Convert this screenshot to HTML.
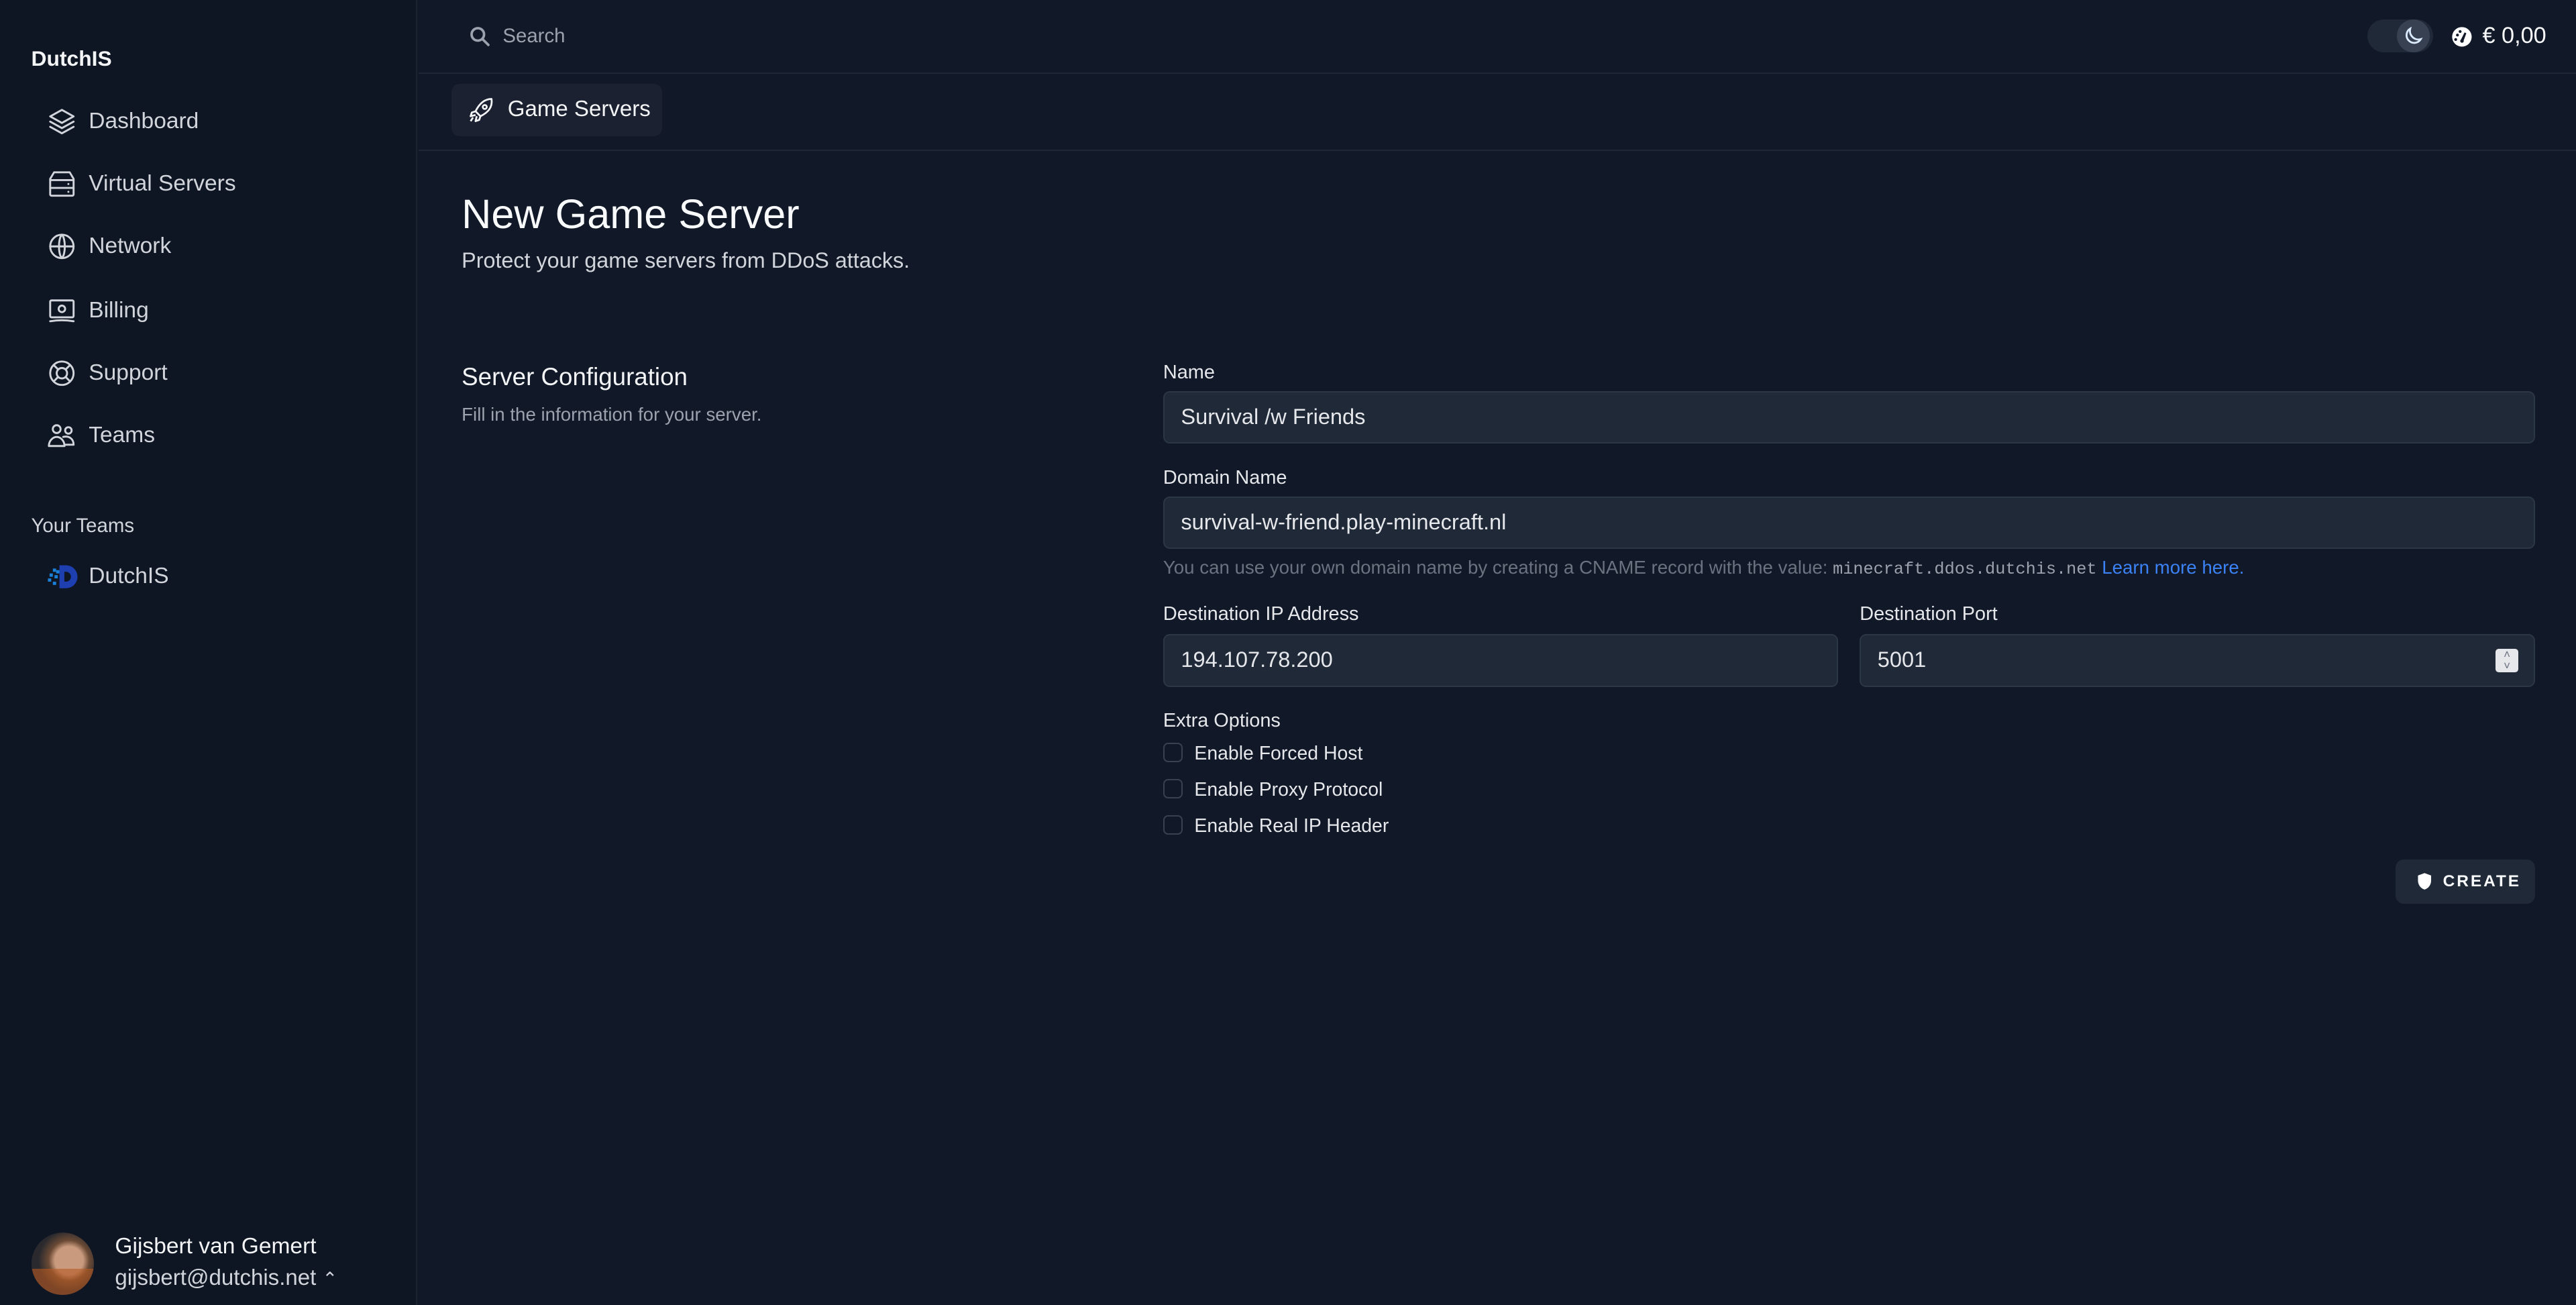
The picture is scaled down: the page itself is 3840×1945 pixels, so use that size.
<!DOCTYPE html>
<html><head><meta charset="utf-8"><style>
*{box-sizing:border-box;margin:0;padding:0}
html,body{width:3840px;height:1945px;overflow:hidden;background:#111827}
#r{zoom:2.449;width:1568px;height:794.2px;position:relative;top:1px;font-family:"Liberation Sans",Arial,sans-serif;color:#e5e7eb}
.abs{position:absolute}
#side{left:0;top:-1px;width:254px;height:796px;background:#0f1623;border-right:1px solid #1b2230}
.nav{position:absolute;left:28px;display:flex;align-items:center;font-size:13.7px;color:#d1d5db;height:20px}
.nav svg{width:19px;height:19px;margin-right:7px;fill:none;stroke:#d1d5db;stroke-width:1.5;stroke-linecap:round;stroke-linejoin:round}
.lbl{position:absolute;font-size:11.8px;color:#e5e7eb}
.inp{position:absolute;height:32px;background:#1f2937;border:1px solid #2b3646;border-radius:4px;font-size:13.3px;color:#e5e7eb;padding-left:10px;line-height:30px}
.cb{position:absolute;left:708px;width:12px;height:12px;border:1px solid #374151;border-radius:3px;background:#111827}
.cbl{position:absolute;left:727px;font-size:11.6px;color:#e5e7eb}
</style></head><body><div id="r">
<div id="side" class="abs">
 <div class="abs" style="left:19px;top:28px;font-size:13px;font-weight:bold;color:#f3f4f6">DutchIS</div>
 <div class="nav" style="top:64px"><svg viewBox="0 0 24 24"><path d="M12 3 3 8l9 5 9-5z"/><path d="M3 12l9 5 9-5"/><path d="M3 16l9 5 9-5"/></svg>Dashboard</div>
 <div class="nav" style="top:102px"><svg viewBox="0 0 24 24"><path d="M6 3h12l3 5v12a1 1 0 0 1-1 1H4a1 1 0 0 1-1-1V8z"/><path d="M3 9h18M3 15h18"/><path d="M17 12h.01M17 18h.01"/></svg>Virtual Servers</div>
 <div class="nav" style="top:140px"><svg viewBox="0 0 24 24"><circle cx="12" cy="12" r="9"/><path d="M3 12h18M12 3c3 3 3 15 0 18M12 3c-3 3-3 15 0 18"/></svg>Network</div>
 <div class="nav" style="top:179px"><svg viewBox="0 0 24 24"><rect x="3" y="4" width="18" height="13" rx="1"/><circle cx="12" cy="10.5" r="2.5"/><path d="M3 20c6-1 12-1 18 0"/></svg>Billing</div>
 <div class="nav" style="top:217px"><svg viewBox="0 0 24 24"><circle cx="12" cy="12" r="9"/><circle cx="12" cy="12" r="4"/><path d="M6 6l3 3M18 6l-3 3M6 18l3-3M18 18l-3-3"/></svg>Support</div>
 <div class="nav" style="top:255px"><svg viewBox="0 0 24 24"><circle cx="8" cy="7" r="3"/><circle cx="17" cy="8" r="2.5"/><path d="M2 20c0-4 3-7 6-7s6 3 6 7zM13 13c4-1 8 1 8 6h-6"/></svg>Teams</div>
 <div class="abs" style="left:19px;top:313px;font-size:12px;color:#d1d5db">Your Teams</div>
 <div class="abs" style="left:28px;top:343px;width:20px;height:16px">
  <svg viewBox="0 0 20 16" width="20" height="16"><path d="M8 1h4a7 7 0 0 1 0 14H8z" fill="#1e3fb0"/><path d="M11 5h1a3 3 0 0 1 0 6h-1z" fill="#0f1623"/><g fill="#1a7fd6"><rect x="4" y="3" width="2" height="2"/><rect x="2" y="6" width="2" height="2"/><rect x="5" y="7" width="2" height="2"/><rect x="1" y="9" width="2" height="2"/><rect x="4" y="11" width="2" height="2"/><rect x="6" y="4" width="2" height="2"/></g></svg>
 </div>
 <div class="abs" style="left:54px;top:343px;font-size:13.7px;color:#d1d5db">DutchIS</div>
 <div class="abs" style="left:19px;top:750px;width:38px;height:38px;border-radius:50%;background:radial-gradient(circle at 60% 45%,#c99a7e 0 28%,#6b4a35 40%,#2a2a2e 60%);overflow:hidden"><div class="abs" style="left:0;top:22px;width:38px;height:16px;background:#b85a22;opacity:.6"></div></div>
 <div class="abs" style="left:70px;top:751px;font-size:13.7px;color:#f3f4f6">Gijsbert van Gemert</div>
 <div class="abs" style="left:70px;top:770px;font-size:13.5px;color:#d1d5db">gijsbert@dutchis.net <span style="font-size:11px">&#8963;</span></div>
</div>
<div class="abs" style="left:255px;top:43px;right:0;height:1px;background:#1e2736"></div>
<svg class="abs" style="left:285px;top:14px" width="14" height="14" viewBox="0 0 24 24" fill="none" stroke="#9ca3af" stroke-width="2.6" stroke-linecap="round"><circle cx="10" cy="10" r="6.5"/><path d="M15 15l6 6"/></svg>
<div class="abs" style="left:306px;top:14px;font-size:12px;color:#9ca3af">Search</div>
<div class="abs" style="left:1441px;top:11px;width:40px;height:20px;border-radius:10px;background:#1f2937"></div>
<div class="abs" style="left:1459px;top:11px;width:20px;height:20px;border-radius:50%;background:#374151"></div>
<svg class="abs" style="left:1462px;top:14px" width="14" height="14" viewBox="0 0 24 24" fill="none" stroke="#dbeafe" stroke-width="2"><path d="M20 15A9 9 0 0 1 9 4a8 8 0 1 0 11 11z"/></svg>
<svg class="abs" style="left:1492px;top:15px" width="13" height="13" viewBox="0 0 24 24"><circle cx="12" cy="12" r="11" fill="#fff"/><g fill="#111827"><circle cx="7" cy="10" r="1.6"/><circle cx="10" cy="6" r="1.6"/><circle cx="5" cy="15" r="1.6"/><path d="M15 7l2 1-3 8a2 2 0 1 1-3-1z"/></g></svg>
<div class="abs" style="left:1511px;top:13px;font-size:14px;color:#f9fafb">€ 0,00</div>
<div class="abs" style="left:255px;top:90px;right:0;height:1px;background:#1e2736"></div>
<div class="abs" style="left:275px;top:50px;width:128px;height:32px;border-radius:5px;background:#1b2130"></div>
<svg class="abs" style="left:284px;top:57px" width="18" height="18" viewBox="0 0 24 24" fill="none" stroke="#f3f4f6" stroke-width="1.5" stroke-linejoin="round"><path d="M20 3c-6 0-10 4-13 10l4 4c6-3 10-7 9-14z"/><circle cx="14.5" cy="9.5" r="1.6"/><path d="M7 13l-3 1-1 3 4-1M11 17l-1 3-3 1 1-4M5 18l-2 3"/></svg>
<div class="abs" style="left:309px;top:58px;font-size:13.5px;color:#f3f4f6">Game Servers</div>
<div class="abs" style="left:281px;top:115px;font-size:25px;color:#f9fafb">New Game Server</div>
<div class="abs" style="left:281px;top:150px;font-size:13.2px;color:#d1d5db">Protect your game servers from DDoS attacks.</div>
<div class="abs" style="left:281px;top:220px;font-size:15px;color:#f3f4f6">Server Configuration</div>
<div class="abs" style="left:281px;top:245px;font-size:11.3px;color:#9ca3af">Fill in the information for your server.</div>
<div class="lbl" style="left:708px;top:219px">Name</div>
<div class="inp" style="left:708px;top:237px;width:835px">Survival /w Friends</div>
<div class="lbl" style="left:708px;top:283px">Domain Name</div>
<div class="inp" style="left:708px;top:301px;width:835px">survival-w-friend.play-minecraft.nl</div>
<div class="abs" style="left:708px;top:338px;font-size:11.3px;color:#6b7280">You can use your own domain name by creating a CNAME record with the value: <span style="font-family:'Liberation Mono',monospace;font-size:10.3px;color:#9ca3af">minecraft.ddos.dutchis.net</span> <span style="color:#3b82f6">Learn more here.</span></div>
<div class="lbl" style="left:708px;top:366px">Destination IP Address</div>
<div class="lbl" style="left:1132px;top:366px">Destination Port</div>
<div class="inp" style="left:708px;top:385px;width:411px">194.107.78.200</div>
<div class="inp" style="left:1132px;top:385px;width:411px">5001</div>
<div class="abs" style="left:1519px;top:394px;width:14px;height:14px;background:#e5e7eb;border-radius:2px;font-size:7px;color:#6b7280;text-align:center;line-height:7px">&#708;<br>&#709;</div>
<div class="lbl" style="left:708px;top:431px">Extra Options</div>
<div class="cb" style="top:451px"></div><div class="cbl" style="top:451px">Enable Forced Host</div>
<div class="cb" style="top:473px"></div><div class="cbl" style="top:473px">Enable Proxy Protocol</div>
<div class="cb" style="top:495px"></div><div class="cbl" style="top:495px">Enable Real IP Header</div>
<div class="abs" style="left:1458px;top:522px;width:85px;height:27px;border-radius:5px;background:#1f2937"></div>
<svg class="abs" style="left:1471px;top:530px" width="10" height="11" viewBox="0 0 20 22"><path d="M10 1 2 4v6c0 6 4 10 8 11 4-1 8-5 8-11V4z" fill="#fff"/></svg>
<div class="abs" style="left:1487px;top:530px;font-size:10px;font-weight:bold;letter-spacing:1.2px;color:#f9fafb">CREATE</div>
</div></body></html>
